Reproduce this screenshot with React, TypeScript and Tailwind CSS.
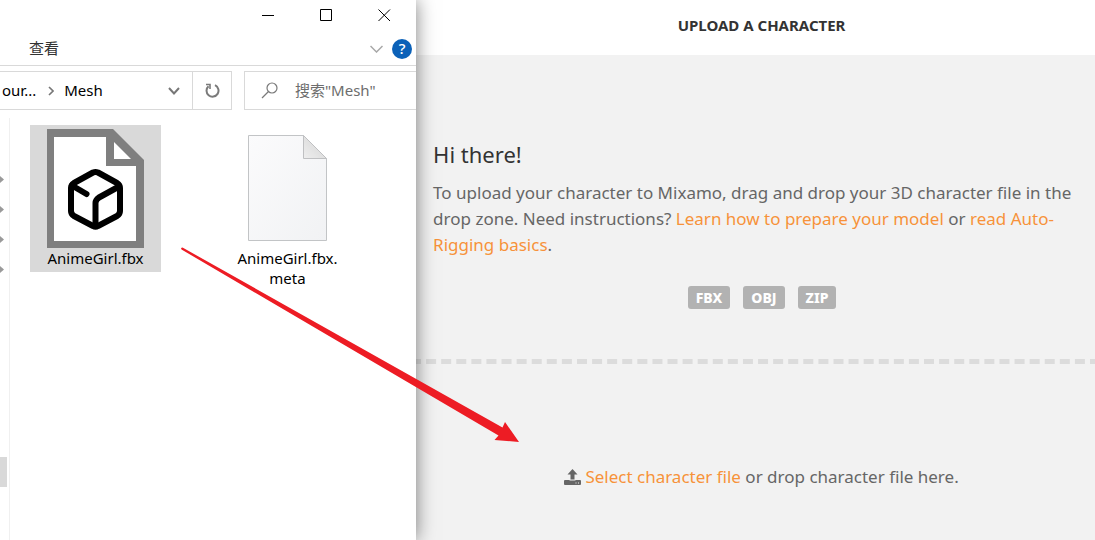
import type { ReactNode } from "react";

const ORANGE = "text-[#f7923a]";

function WindowButton({ label, children }: { label: string; children: ReactNode }) {
  return (
    <button type="button" aria-label={label} className="flex h-full w-[58px] items-center justify-center">
      <svg width="13" height="13" viewBox="0 0 13 13" fill="none" stroke="#000">
        {children}
      </svg>
    </button>
  );
}

function ModelFileIcon() {
  return (
    <svg width="97" height="119" viewBox="0 0 97 119" fill="none" aria-hidden="true">
      <path d="M0 0H66L97 31V119H0Z" fill="#7f7f7f" />
      <path d="M7 8H59V37H89V112H7Z" fill="#fff" />
      <path d="M67 13L84 30H67Z" fill="#fff" />
      <g stroke="#000" strokeWidth="6" strokeLinecap="round" strokeLinejoin="round">
        <path d="M46 43.500Q48.500 42.500 51 43.500L70 54Q73 56 73 59V82Q73 85 70 87L51 97Q48.500 98.500 46 97L27 87Q24 85 24 82V59Q24 56 27 54Z" />
        <path d="M25 56.500L39.500 65" />
        <path d="M72 57.500L52 68.500Q48.500 71 48.500 74V96" />
      </g>
    </svg>
  );
}

function BlankFileIcon() {
  return (
    <svg width="80" height="107" viewBox="0 0 80 107" fill="none" aria-hidden="true">
      <defs>
        <linearGradient id="sheet" x1="0" y1="0" x2="1" y2="1">
          <stop offset="0" stopColor="#fbfbfc" />
          <stop offset="1" stopColor="#f1f2f4" />
        </linearGradient>
        <linearGradient id="fold" x1="0" y1="1" x2="1" y2="0">
          <stop offset="0" stopColor="#eeeeee" />
          <stop offset="1" stopColor="#d2d2d2" />
        </linearGradient>
      </defs>
      <path d="M.5 .5H55.500L78.500 23.500V105.500H.5Z" fill="url(#sheet)" stroke="#c2c4c6" />
      <path d="M55.500 .5V23.500H78.500Z" fill="url(#fold)" stroke="#bfc0c2" />
    </svg>
  );
}

function FileItem({ icon, selected, children }: { icon: ReactNode; selected?: boolean; children: ReactNode }) {
  return (
    <button
      type="button"
      className={`flex w-[131px] flex-col items-center self-start pb-1 text-center text-[15px] leading-5 text-black ${
        selected ? "bg-[#d9d9d9]" : ""
      }`}
    >
      <span className="flex h-[123px] items-center pt-[3px]">{icon}</span>
      <span>{children}</span>
    </button>
  );
}

function Explorer() {
  return (
    <section className="relative z-10 flex w-[38%] shrink-0 flex-col bg-white font-['Noto_Sans','Noto_Sans_CJK_SC',sans-serif] shadow-[0_0_18px_rgba(0,0,0,0.5)]">
      <div className="flex h-[30px] justify-end pr-[3px]">
        <WindowButton label="最小化">
          <path d="M0 6.500H12" />
        </WindowButton>
        <WindowButton label="最大化">
          <path d="M.5 .5H11.500V11.500H.5Z" />
        </WindowButton>
        <WindowButton label="关闭">
          <path d="M.5 .5L12 12M12 .5L.5 12" />
        </WindowButton>
      </div>

      <div className="flex h-9 items-center justify-between border-b border-[#d9d9d9] pt-[2px] pr-1 pl-[29px]">
        <button type="button" className="text-[15px] text-[#333]">查看</button>
        <div className="flex items-center gap-[9px]">
          <button type="button" aria-label="展开功能区">
            <svg width="13" height="8" viewBox="0 0 13 8" fill="none" stroke="#a8a8a8" strokeWidth="1.5">
              <path d="M.5 1L6.500 7L12.500 1" />
            </svg>
          </button>
          <button
            type="button"
            aria-label="帮助"
            className="flex size-5 items-center justify-center rounded-full bg-[#0b61b8] text-[15px] font-medium text-white"
          >
            ?
          </button>
        </div>
      </div>

      <div className="mt-[5px] flex h-[39px] text-[15px]">
        <div className="flex w-[193px] shrink-0 items-center border-y border-r border-[#d9d9d9] pl-[2px] text-black">
          <span>our...</span>
          <svg className="ml-3" width="6" height="10" viewBox="0 0 6 10" fill="none" stroke="#777" strokeWidth="1.6">
            <path d="M1 1L5 5L1 9" />
          </svg>
          <span className="ml-[10px]">Mesh</span>
          <button type="button" aria-label="历史记录" className="mr-3 ml-auto">
            <svg width="12" height="8" viewBox="0 0 12 8" fill="none" stroke="#777" strokeWidth="2">
              <path d="M1 1L6 6.500L11 1" />
            </svg>
          </button>
        </div>
        <button
          type="button"
          aria-label="刷新"
          className="flex w-[39px] shrink-0 items-center justify-center border-y border-r border-[#d9d9d9]"
        >
          <svg width="15" height="15" viewBox="0 0 15 15" fill="none" stroke="#7a7a7a" strokeWidth="2">
            <path d="M10 2.200A6 6 0 1 1 3.500 3.200" />
            <path d="M1 1.500H5V6" strokeWidth="1.600" />
          </svg>
        </button>
        <label className="ml-3 flex min-w-0 flex-1 items-center border-y border-l border-[#d9d9d9] pl-4">
          <svg className="shrink-0" width="18" height="17" viewBox="0 0 18 17" fill="none" stroke="#7a7a7a" strokeWidth="1.2">
            <circle cx="11" cy="6" r="5" />
            <path d="M7.500 9.500L1 16" />
          </svg>
          <input
            type="text"
            aria-label="搜索"
            placeholder={'搜索"Mesh"'}
            className="ml-4 w-full min-w-0 bg-transparent outline-none placeholder:text-[#6d6d6d]"
          />
        </label>
      </div>

      <div className="mt-2 flex flex-1">
        <div className="w-[10px] shrink-0 border-r border-[#f0f0f0] pt-[46px]">
          {[0, 1, 2, 3].map((pin) => (
            <div key={pin} className="flex h-[30px] items-center">
              <svg width="4" height="7" viewBox="0 0 4 7" fill="#9a9a9a">
                <path d="M0 0L4 3.500L0 7Z" />
              </svg>
            </div>
          ))}
          <div className="mt-[173px] h-[30px] w-[7px] bg-[#d9d9d9]" />
        </div>
        <div className="flex gap-[61px] pt-[7px] pl-5">
          <FileItem selected icon={<ModelFileIcon />}>
            AnimeGirl.fbx
          </FileItem>
          <FileItem icon={<BlankFileIcon />}>
            AnimeGirl.fbx.
            <br />
            meta
          </FileItem>
        </div>
      </div>
    </section>
  );
}

function UploadPanel() {
  return (
    <main className="flex min-w-0 flex-1 flex-col overflow-hidden bg-[#f2f2f2] font-['Noto_Sans','Open_Sans',sans-serif] text-[17px] leading-[26px] text-[#666]">
      <header className="flex h-[55px] items-center justify-center bg-white pr-1 pb-[6px] pl-4">
        <h1 className="text-[15px] font-bold text-[#333]">UPLOAD A CHARACTER</h1>
      </header>
      <section className="pt-[83px] pr-1 pb-[50px] pl-[17px]">
        <h2 className="text-[22px] leading-8 text-[#333]">Hi there!</h2>
        <p className="mt-[10px] pr-3">
          To upload your character to Mixamo, drag and drop your 3D character file in the drop zone. Need instructions?{" "}
          <a href="#prepare" className={ORANGE}>Learn how to prepare your model</a> or{" "}
          <a href="#rigging" className={ORANGE}>read Auto-Rigging basics</a>.
        </p>
        <ul className="mt-7 flex justify-center gap-[13px]">
          {["FBX", "OBJ", "ZIP"].map((format) => (
            <li key={format} className="rounded-[3px] bg-[#b2b2b2] px-2 text-[14px] leading-[23px] font-extrabold text-white">
              {format}
            </li>
          ))}
        </ul>
      </section>
      <div className="-mx-[5px] border-t-[5px] border-dashed border-[#dcdcdc]" />
      <section className="flex flex-1 items-start justify-center pt-[100px] pl-3">
        <p className="flex items-center gap-1">
          <svg width="17" height="16" viewBox="0 0 17 16" fill="#666" aria-hidden="true">
            <path d="M8.500 0L13.500 5.500H10.500V10.500H6.500V5.500H3.500Z" />
            <path d="M1 11H5.500V11.500H11.500V11H16Q17 11 17 12V15Q17 16 16 16H1Q0 16 0 15V12Q0 11 1 11Z" />
            <path d="M11.500 13.500H12.500V14.500H11.500ZM14 13.500H15V14.500H14Z" fill="#f2f2f2" />
          </svg>
          <span>
            <a href="#select" className={ORANGE}>Select character file</a> or drop character file here.
          </span>
        </p>
      </section>
    </main>
  );
}

export default function App() {
  return (
    <div className="relative flex min-h-screen overflow-hidden">
      <Explorer />
      <UploadPanel />
      <svg
        className="pointer-events-none absolute top-[247px] left-[180px] z-20"
        width="340"
        height="197"
        viewBox="0 0 340 197"
        fill="#ed1c24"
        aria-hidden="true"
      >
        <path d="M1 1L2.500 .5L322.500 180.500L325 175L339 195L314.500 193L318.500 188.500L1.500 2.500Z" />
      </svg>
    </div>
  );
}
